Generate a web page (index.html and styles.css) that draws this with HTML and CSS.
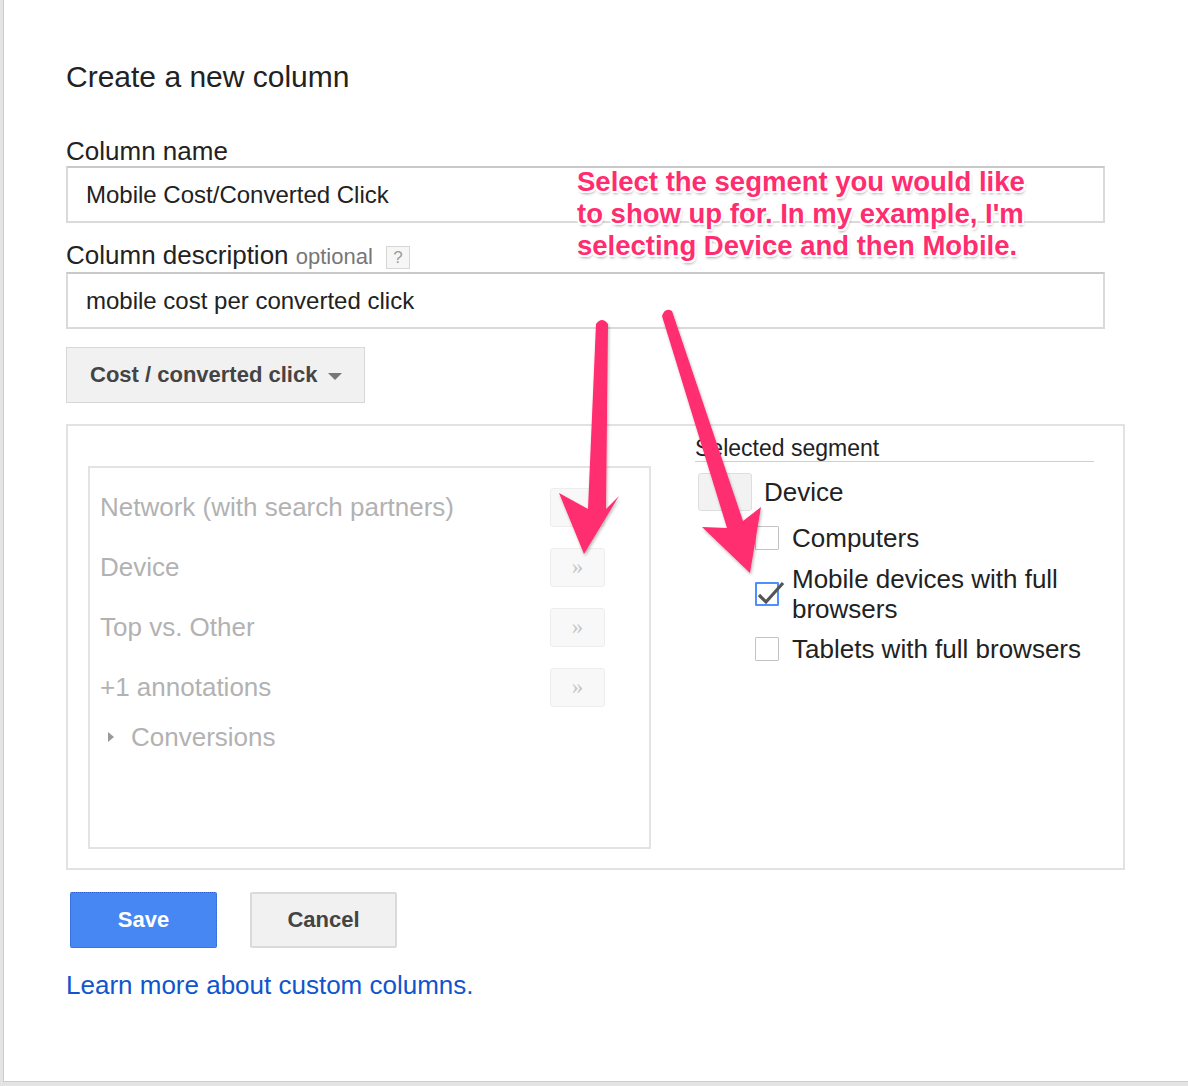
FILE: index.html
```html
<!DOCTYPE html>
<html lang="en">
<head>
<meta charset="utf-8">
<title>Create a new column</title>
<link rel="stylesheet" href="styles.css">
</head>
<body>
<div class="dialog">
  <h1 class="title">Create a new column</h1>

  <div class="field-label first">Column name</div>
  <div class="text-input">Mobile Cost/Converted Click</div>

  <div class="field-label second">Column description <span class="optional">optional</span><span class="help">?</span></div>
  <div class="text-input desc">mobile cost per converted click</div>

  <div class="dropdown">Cost / converted click<span class="caret"></span></div>

  <div class="segment-box">
    <div class="segment-list">
      <div class="seg-row"><span>Network (with search partners)</span><span class="move-btn">&raquo;</span></div>
      <div class="seg-row"><span>Device</span><span class="move-btn">&raquo;</span></div>
      <div class="seg-row"><span>Top vs. Other</span><span class="move-btn">&raquo;</span></div>
      <div class="seg-row"><span>+1 annotations</span><span class="move-btn">&raquo;</span></div>
      <div class="seg-group"><span class="tri"></span><span>Conversions</span></div>
    </div>
    <div class="selected">
      <div class="selected-head">Selected segment</div>
      <div class="device-row"><span class="device-btn"></span><span>Device</span></div>
      <div class="check-row c1"><span class="checkbox"></span><span class="check-label">Computers</span></div>
      <div class="check-row c2"><span class="checkbox checked"><svg class="tick" width="32" height="32" viewBox="0 0 32 32"><path d="M3 15 L10 22 L27 3" fill="none" stroke="#555" stroke-width="3.2" stroke-linejoin="miter"/></svg></span><span class="check-label">Mobile devices with full browsers</span></div>
      <div class="check-row c3"><span class="checkbox"></span><span class="check-label">Tablets with full browsers</span></div>
    </div>
  </div>

  <div class="actions">
    <span class="btn save">Save</span>
    <span class="btn cancel">Cancel</span>
  </div>

  <a class="learn" href="#">Learn more about custom columns.</a>
</div>

<div class="overlay">
  <svg class="arrows" width="1188" height="1086" viewBox="0 0 1188 1086">
    <defs>
      <filter id="sh" x="-20%" y="-20%" width="140%" height="140%">
        <feDropShadow dx="1" dy="2" stdDeviation="1.6" flood-color="#000" flood-opacity="0.28"/>
      </filter>
    </defs>
    <g fill="#ff2d6f" filter="url(#sh)">
      <path d="M596 324 Q602 316 608 324 L606 509 L619 496 L584 554 L559 493 L588 509 Z"/>
      <path d="M662 316 Q665 307 672 311 L743 521 L761 507 L750 573 L702 527 L727 528 Z"/>
    </g>
  </svg>
  <div class="note">Select the segment you would like<br>to show up for. In my example, I'm<br>selecting Device and then Mobile.</div>
</div>
</body>
</html>
```

FILE: styles.css
```css
html, body {
  margin: 0;
  padding: 0;
}

body {
  position: relative;
  width: 1188px;
  height: 1086px;
  overflow: hidden;
  background: #e4e4e4;
  font-family: "Liberation Sans", Arial, Helvetica, sans-serif;
  color: #222;
}

.dialog {
  box-sizing: border-box;
  margin-left: 3px;
  width: 1185px;
  height: 1082px;
  padding: 60px 0 0 62px;
  background: #fff;
  border-left: 1px solid #cdcdcd;
  border-bottom: 1px solid #cdcdcd;
}

.title {
  margin: 0;
  font-size: 30px;
  line-height: 34px;
  font-weight: normal;
  color: #222;
}

.field-label {
  height: 30px;
  font-size: 26px;
  line-height: 30px;
  color: #222;
}

.field-label.first {
  margin-top: 42px;
}

.field-label.second {
  margin-top: 17px;
}

.optional {
  font-size: 22px;
  color: #777;
}

.help {
  display: inline-block;
  box-sizing: border-box;
  width: 24px;
  height: 23px;
  margin-left: 13px;
  vertical-align: 1px;
  border: 1px solid #d6d6d6;
  background: #f6f6f6;
  color: #9c9c9c;
  font-size: 17px;
  line-height: 21px;
  text-align: center;
}

.text-input {
  box-sizing: border-box;
  width: 1039px;
  height: 57px;
  padding-left: 18px;
  display: flex;
  align-items: center;
  border: 2px solid #dadada;
  border-top-color: #c9c9c9;
  font-size: 24px;
  color: #222;
}

.text-input.desc {
  margin-top: 2px;
}

.dropdown {
  box-sizing: border-box;
  margin-top: 18px;
  width: 299px;
  height: 56px;
  padding-left: 23px;
  display: flex;
  align-items: center;
  background: #f1f1f1;
  border: 1px solid #d7d7d7;
  font-size: 22px;
  font-weight: bold;
  color: #444;
}

.caret {
  width: 0;
  height: 0;
  margin-left: 11px;
  margin-top: 2px;
  border-left: 7px solid transparent;
  border-right: 7px solid transparent;
  border-top: 7px solid #777;
}

.segment-box {
  box-sizing: border-box;
  margin-top: 21px;
  width: 1059px;
  height: 446px;
  padding: 9px 0 0 20px;
  border: 2px solid #e2e2e2;
  display: grid;
  grid-template-columns: 563px 399px;
  column-gap: 44px;
  align-items: start;
}

.segment-list {
  box-sizing: border-box;
  margin-top: 31px;
  height: 383px;
  padding: 9px 44px 0 10px;
  border: 2px solid #e3e3e3;
  color: #b2b2b2;
  font-size: 26px;
}

.seg-row {
  height: 60px;
  display: flex;
  align-items: center;
  justify-content: space-between;
}

.move-btn {
  box-sizing: border-box;
  width: 55px;
  height: 39px;
  display: flex;
  align-items: center;
  justify-content: center;
  border: 1px solid #ededed;
  border-radius: 3px;
  background: #f8f8f8;
  color: #c6c6c6;
  font-family: "Liberation Serif", serif;
  font-size: 23px;
}

.seg-group {
  height: 40px;
  display: flex;
  align-items: center;
}

.tri {
  width: 0;
  height: 0;
  margin-left: 8px;
  margin-right: 17px;
  border-top: 5px solid transparent;
  border-bottom: 5px solid transparent;
  border-left: 6px solid #9a9a9a;
}

.selected {
  color: #222;
}

.selected-head {
  height: 26px;
  font-size: 23px;
  line-height: 26px;
  border-bottom: 1px solid #cfcfcf;
}

.device-row {
  margin-top: 11px;
  height: 38px;
  display: flex;
  align-items: center;
  font-size: 26px;
}

.device-btn {
  box-sizing: border-box;
  width: 54px;
  height: 38px;
  margin-left: 3px;
  margin-right: 12px;
  background: #f2f2f2;
  border: 1px solid #dedede;
  border-radius: 3px;
}

.check-row {
  display: flex;
  align-items: center;
  padding-left: 60px;
  font-size: 26px;
  line-height: 30px;
}

.check-row.c1 { margin-top: 12px; }
.check-row.c2 { margin-top: 11px; }
.check-row.c3 { margin-top: 10px; }

.checkbox {
  position: relative;
  flex: none;
  box-sizing: border-box;
  width: 24px;
  height: 24px;
  margin-right: 13px;
  border: 1px solid #c3c3c3;
  border-radius: 1px;
  background: #fff;
}

.checkbox.checked {
  border: 2px solid #4d90fe;
}

.tick {
  position: absolute;
  left: -1px;
  top: -4px;
  overflow: visible;
}

.check-label {
  width: 290px;
}

.actions {
  margin-top: 22px;
  display: flex;
  height: 56px;
}

.btn {
  box-sizing: border-box;
  width: 147px;
  height: 56px;
  display: flex;
  align-items: center;
  justify-content: center;
  font-size: 22px;
  font-weight: bold;
  border-radius: 2px;
}

.btn.save {
  margin-left: 4px;
  background: #4787f3;
  border: 1px dotted #2b5fcf;
  color: #fff;
}

.btn.cancel {
  margin-left: 33px;
  background: #f1f1f1;
  border: 2px solid #dadada;
  color: #444;
}

.learn {
  display: block;
  margin-top: 22px;
  font-size: 26px;
  line-height: 30px;
  color: #1155cc;
  text-decoration: none;
  width: max-content;
}

.overlay {
  position: absolute;
  left: 0;
  top: 0;
  width: 1188px;
  height: 1086px;
  pointer-events: none;
}

.arrows {
  position: absolute;
  left: 0;
  top: 0;
}

.note {
  position: absolute;
  left: 577px;
  top: 166px;
  font-size: 27.5px;
  line-height: 32px;
  font-weight: bold;
  color: #ff2d6f;
  white-space: nowrap;
  text-shadow:
    -1.5px -1.5px 0 #fff, 1.5px -1.5px 0 #fff, -1.5px 1.5px 0 #fff, 1.5px 1.5px 0 #fff,
    0 -2px 0 #fff, 0 2px 0 #fff, -2px 0 0 #fff, 2px 0 0 #fff,
    1px 3px 3px rgba(0, 0, 0, 0.35);
}
```
